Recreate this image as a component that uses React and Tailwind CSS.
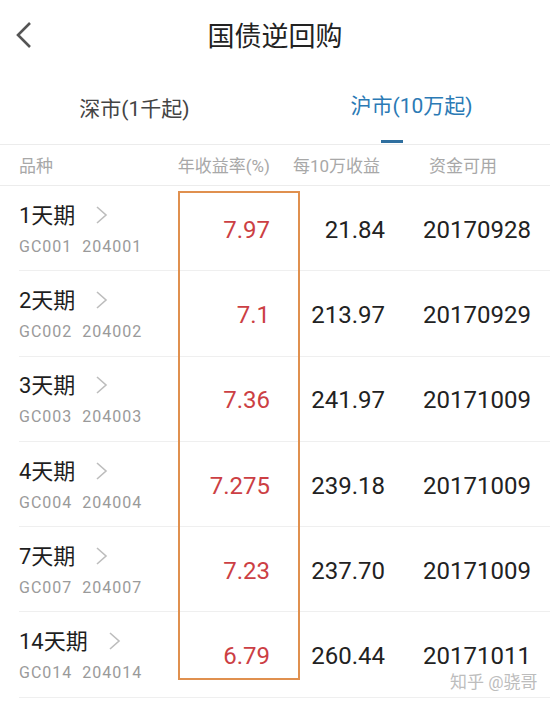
import React from "react";

const F = { fontFamily: "Roboto, 'Noto Sans CJK SC', sans-serif" };

const rows = [
  ["1天期", "GC001", "204001", "7.97", "21.84", "20170928"],
  ["2天期", "GC002", "204002", "7.1", "213.97", "20170929"],
  ["3天期", "GC003", "204003", "7.36", "241.97", "20171009"],
  ["4天期", "GC004", "204004", "7.275", "239.18", "20171009"],
  ["7天期", "GC007", "204007", "7.23", "237.70", "20171009"],
  ["14天期", "GC014", "204014", "6.79", "260.44", "20171011"],
];

function Chevron() {
  return (
    <svg width="14" height="20" viewBox="0 0 14 20" className="ml-[20px] mt-[-2px]">
      <polyline points="2,2 11,10 2,18" fill="none" stroke="#bdbdbd" strokeWidth="1.6" />
    </svg>
  );
}

export default function App() {
  return (
    <div className="relative w-[550px] h-[706px] bg-white overflow-hidden" style={F}>
      {/* title bar */}
      <div className="relative h-[74px] flex items-center justify-center">
        <svg width="20" height="28" viewBox="0 0 20 28" className="absolute left-[13px] top-[21px]">
          <polyline points="17,2 5,14 17,26" fill="none" stroke="#555" strokeWidth="2.6" />
        </svg>
        <span className="text-[27px] text-[#222] leading-none">国债逆回购</span>
      </div>
      {/* tabs */}
      <div className="h-[71px] flex border-b border-[#ececec]">
        <div className="flex-1 flex items-center justify-center pt-[1px]">
          <span className="text-[21px] text-[#444] leading-none ml-[-6px]">深市(1千起)</span>
        </div>
        <div className="flex-1 flex flex-col items-center justify-end">
          <span className="text-[21px] text-[#2b7ab5] leading-none mb-[23px] ml-[-2px]">沪市(10万起)</span>
          <div className="w-[22px] h-[3px] bg-[#2f6f9f] ml-[-42px] mb-[1px]" />
        </div>
      </div>
      {/* header */}
      <div className="h-[41px] flex items-center pl-[19px] pt-[3px] border-b border-[#ececec] text-[17px] text-[#a8a8a8] leading-none whitespace-nowrap">
        <div className="w-[150px]">品种</div>
        <div className="w-[101px] flex justify-end">年收益率(%)</div>
        <div className="w-[110px] flex justify-end">每10万收益</div>
        <div className="w-[117px] flex justify-end">资金可用</div>
      </div>
      {/* rows */}
      <div className="pl-[19px]">
        {rows.map((r, i) => (
          <div key={i} className="h-[85.3px] flex items-center border-b border-[#efefef]">
            <div className="w-[161px] flex flex-col justify-center pt-[3px]">
              <div className="flex items-center">
                <span className="text-[22px] text-[#1e1e1e] leading-none">{r[0]}</span>
                <Chevron />
              </div>
              <div className="flex gap-[10px] text-[16px] text-[#9a9a9a] leading-none mt-[12px] tracking-[1px]">
                <span>{r[1]}</span>
                <span>{r[2]}</span>
              </div>
            </div>
            <div className="w-[90px] text-right text-[24px] text-[#cc3f44] leading-none pt-[3px]">{r[3]}</div>
            <div className="w-[115px] text-right text-[24px] text-[#222] leading-none pt-[3px]">{r[4]}</div>
            <div className="w-[146px] text-right text-[24px] text-[#222] leading-none pt-[3px]">{r[5]}</div>
          </div>
        ))}
      </div>
      {/* orange highlight box */}
      <div className="absolute left-[178px] top-[191px] w-[122px] h-[489px] border-2 border-[#e0904f]" />
      {/* watermark */}
      <div className="absolute left-[450px] top-[674px] text-[17px] text-[#bdbdbd] leading-none">知乎 @骁哥</div>
    </div>
  );
}
